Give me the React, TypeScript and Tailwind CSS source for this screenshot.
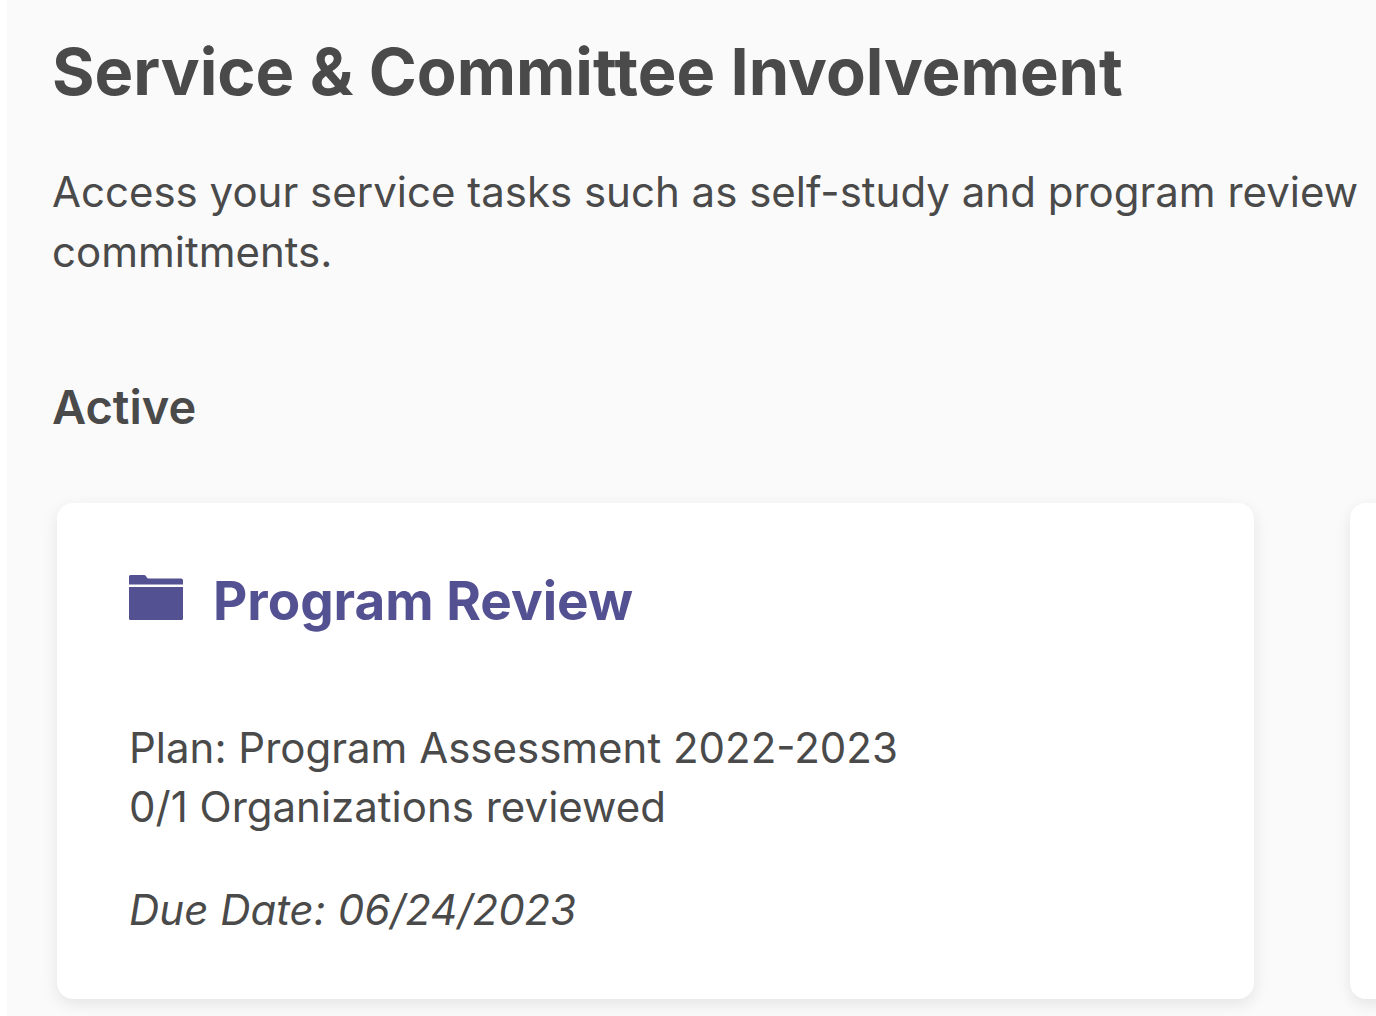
interface Task {
  title: string;
  plan: string;
  progress: string;
  dueDate: string;
}

const activeTasks: Task[] = [
  {
    title: 'Program Review',
    plan: 'Plan: Program Assessment 2022-2023',
    progress: '0/1 Organizations reviewed',
    dueDate: 'Due Date: 06/24/2023',
  },
];

const cardClass = 'rounded-2xl bg-white shadow-[0_5px_16px_rgba(0,0,0,0.09)]';

function FolderIcon() {
  return (
    <svg viewBox="0 0 54 45" className="h-[45px] w-[54px] shrink-0" fill="currentColor" aria-hidden="true">
      <path d="M0 9.5V1.5Q0 0 1.5 0H15Q17 0 17.5 2Q18 3.5 20 3.5H52Q54 3.5 54 5.5V9.5Z" />
      <path d="M0 12H54V43.5Q54 45 52.5 45H1.5Q0 45 0 43.5Z" />
    </svg>
  );
}

function TaskCard({ task }: { task: Task }) {
  return (
    <article className={`${cardClass} px-18 pt-16 pb-15`}>
      <a href="#program-review" className="flex items-start gap-[30px] text-[#545192]">
        <span className="pt-2">
          <FolderIcon />
        </span>
        <h3 className="text-[53px] leading-[68px] font-bold">{task.title}</h3>
      </a>
      <p className="mt-[83px] text-[42px] leading-[59px]">{task.plan}</p>
      <p className="text-[42px] leading-[59px]">{task.progress}</p>
      <p className="mt-11 text-[42px] leading-[59px] italic">{task.dueDate}</p>
    </article>
  );
}

export default function App() {
  return (
    <main className="min-h-screen overflow-hidden border-l-[7px] border-white bg-[#fafafa] pt-8 pb-4 pl-[45px] font-['Inter',sans-serif] text-[#4a4a4a]">
      <h1 className="text-[65px] leading-[80px] font-bold [font-variant-ligatures:none]">
        Service &amp; Committee Involvement
      </h1>
      <p className="mt-[50px] text-[42px] leading-[60px]">
        Access your service tasks such as self-study and program review commitments.
      </p>
      <h2 className="mt-[95px] text-[47px] leading-[60px] font-semibold">Active</h2>
      <div className="mt-[66px] ml-[5px] grid grid-cols-[1fr_26px] gap-24">
        {activeTasks.map((task) => (
          <TaskCard key={task.title} task={task} />
        ))}
        <div className="-mr-8 rounded-l-2xl bg-white shadow-[0_5px_16px_rgba(0,0,0,0.09)]" />
      </div>
    </main>
  );
}
